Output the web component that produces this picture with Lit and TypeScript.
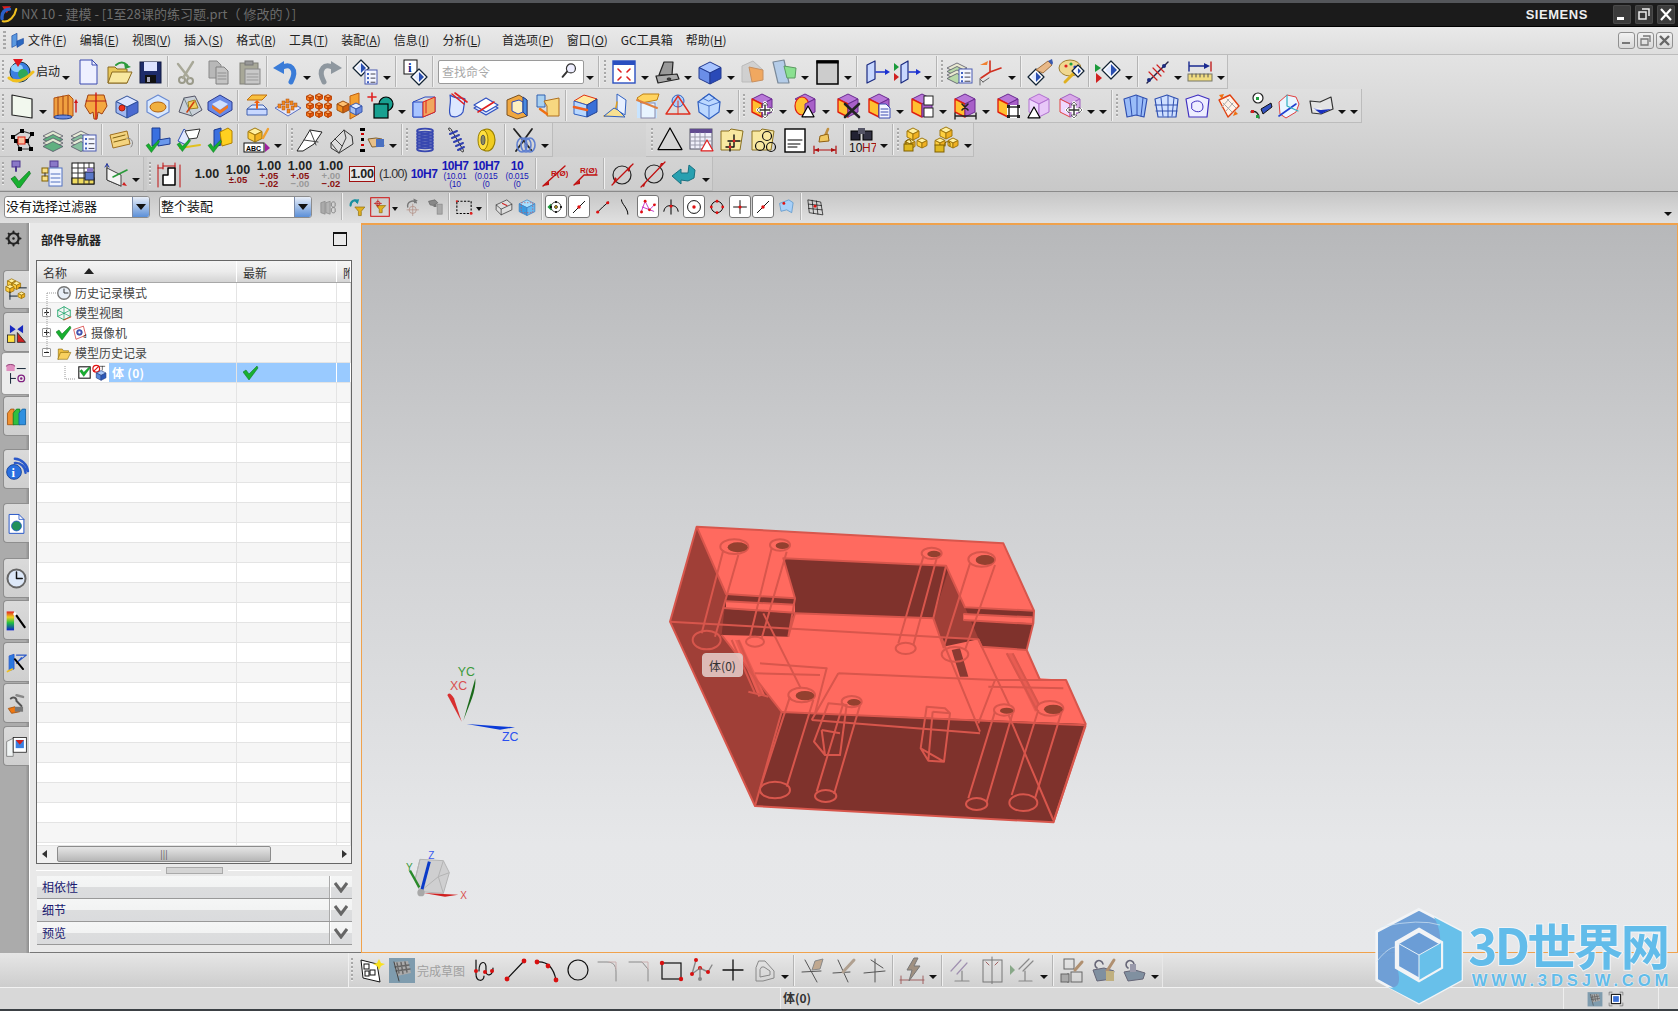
import { LitElement, html, css, TemplateResult } from 'lit';
import { customElement } from 'lit/decorators.js';
import { unsafeSVG } from 'lit/directives/unsafe-svg.js';

const P = (pts: string, fill: string, stroke = 'none', sw = 1) => `<polygon points="${pts}" fill="${fill}" stroke="${stroke}" stroke-width="${sw}" stroke-linejoin="round"/>`;
const L = (d: string, stroke = '#000', sw = 1, fill = 'none') => `<path d="${d}" fill="${fill}" stroke="${stroke}" stroke-width="${sw}" stroke-linecap="round" stroke-linejoin="round"/>`;
const O = (cx: number, cy: number, r: number, fill = 'none', stroke = '#000', sw = 1) => `<circle cx="${cx}" cy="${cy}" r="${r}" fill="${fill}" stroke="${stroke}" stroke-width="${sw}"/>`;
const E = (cx: number, cy: number, rx: number, ry: number, fill = 'none', stroke = '#000', sw = 1) => `<ellipse cx="${cx}" cy="${cy}" rx="${rx}" ry="${ry}" fill="${fill}" stroke="${stroke}" stroke-width="${sw}"/>`;
const R = (x: number, y: number, w: number, h: number, fill = 'none', stroke = '#000', sw = 1) => `<rect x="${x}" y="${y}" width="${w}" height="${h}" fill="${fill}" stroke="${stroke}" stroke-width="${sw}"/>`;
const T = (x: number, y: number, s: string, size: number, fill = '#000', w = 'normal') => `<text x="${x}" y="${y}" font-size="${size}" font-weight="${w}" fill="${fill}" font-family="Liberation Sans,sans-serif">${s}</text>`;
const cube = (cx: number, cy: number, s: number, t: string, l: string, r: string, st = '#334') =>
  P(`${cx},${cy - s} ${cx + s},${cy - s / 2} ${cx},${cy} ${cx - s},${cy - s / 2}`, t, st) +
  P(`${cx - s},${cy - s / 2} ${cx},${cy} ${cx},${cy + s} ${cx - s},${cy + s / 2}`, l, st) +
  P(`${cx + s},${cy - s / 2} ${cx},${cy} ${cx},${cy + s} ${cx + s},${cy + s / 2}`, r, st);
const yc = (cx: number, cy: number, s: number) => cube(cx, cy, s, '#fff0a0', '#ffd040', '#f0b020', '#a07810');
const dia = (cx: number, cy: number, s: number) => P(`${cx},${cy - s} ${cx + s},${cy} ${cx},${cy + s} ${cx - s},${cy}`, '#fff', '#123', 1.2) + P(`${cx},${cy - s + 3} ${cx + s - 3},${cy} ${cx},${cy + s - 3}`, '#2a4fb0') + P(`${cx},${cy - s + 3} ${cx - s + 3},${cy} ${cx},${cy + s - 3}`, '#dfe8ff');
const doc = (x: number, y: number, w: number, h: number) => R(x, y, w, h, '#f4f6ff', '#4a5ab0') + [0, 1, 2].map(i => R(x + 2, y + 3 + i * (h / 3.4), 2, 2, '#4060c0', 'none') + L(`M${x + 6} ${y + 4 + i * (h / 3.4)}h${w - 8}`, '#445')).join('');
const stack = (cx: number, cy: number, c1: string, c2: string) => [0, 1, 2, 3].map(i => P(`${cx},${cy - 6 + i * 3.5} ${cx + 10},${cy - 1 + i * 3.5} ${cx},${cy + 4 + i * 3.5} ${cx - 10},${cy - 1 + i * 3.5}`, i % 2 ? c1 : c2, '#556', .8)).join('');
const check = (x: number, y: number, s = 1, c = '#18b030') => `<path transform="translate(${x} ${y}) scale(${s})" d="M0 6 L3 4 L6 8 L14 0 L15 2 L6 14 Z" fill="${c}" stroke="#0a6a1a" stroke-width=".5"/>`;
const sync = (o: string) => P('14,2 24,7 14,12 4,7', '#b878d8', '#6a2a90') + P('4,7 14,12 14,25 4,20', '#ffc030', '#e02010', 1.4) + P('24,7 14,12 14,25 24,20', '#a860c8', '#6a2a90') + o;
const move = (cx: number, cy: number) => L(`M${cx - 7} ${cy}h14M${cx} ${cy - 7}v14`, '#fff', 4) + L(`M${cx - 7} ${cy}h14M${cx} ${cy - 7}v14`, '#333', 1.4) + P(`${cx - 8},${cy} ${cx - 5},${cy - 3} ${cx - 5},${cy + 3}`, '#fff', '#333', .6) + P(`${cx + 8},${cy} ${cx + 5},${cy - 3} ${cx + 5},${cy + 3}`, '#fff', '#333', .6) + P(`${cx},${cy - 8} ${cx - 3},${cy - 5} ${cx + 3},${cy - 5}`, '#fff', '#333', .6) + P(`${cx},${cy + 8} ${cx - 3},${cy + 5} ${cx + 3},${cy + 5}`, '#fff', '#333', .6);
const tri = (cx: number, cy: number, s: number, f = '#fff', st = '#000') => P(`${cx},${cy - s} ${cx + s},${cy + s * .8} ${cx - s},${cy + s * .8}`, f, st, 1.2);
const hex = (f: string) => P('14,3 25,9 25,20 14,26 3,20 3,9', f, '#6a8ad0', 1.2);

const I: Record<string, string> = {
  start: O(13, 14, 10, '#3a7fe0', '#134') + E(10, 10, 6, 4, '#8fd0ff', 'none') + E(16, 16, 5, 5, '#2ea85a', 'none') + P('6,1 16,1 11,9', '#e01820') + L('M2 20 Q12 28 26 14', '#f0c020', 3),
  new: P('6,2 18,2 23,7 23,26 6,26', '#eef0ff', '#3a4ab0') + L('M18 2v5h5', '#3a4ab0'),
  open: P('3,9 10,9 12,11 22,11 22,25 3,25', '#e8c85a', '#8a6a20') + P('7,14 27,14 22,25 3,25', '#f8e8a0', '#8a6a20') + L('M11 7 Q17 2 22 7', '#2c9a3c', 2) + P('19,5 26,9 20,11', '#2c9a3c'),
  save: R(4, 4, 21, 21, '#1e2c6a', '#101840') + R(8, 4, 13, 9, '#dde3ff', 'none') + R(9, 17, 11, 8, '#111', 'none') + R(11, 19, 3, 5, '#aab', 'none'),
  cut: O(9, 22, 3, 'none', '#9a9a8a', 2) + O(17, 23, 3, 'none', '#9a9a8a', 2) + L('M10 20 L20 4M16 20 L5 6', '#a8a898', 2.4),
  copy: P('5,3 13,3 17,7 17,20 5,20', '#b8b8b8', '#8a8a8a') + P('12,9 20,9 24,13 24,26 12,26', '#c4c4c4', '#808080') + L('M14 15h8M14 18h8M14 21h8', '#909090'),
  paste: R(5, 5, 18, 21, '#a8a898', '#808078') + R(10, 3, 8, 4, '#989898', '#777') + R(10, 11, 15, 15, '#c8c8c8', '#888') + L('M12 16h11M12 19h11M12 22h11', '#999'),
  undo: L('M9 10 C18 4 26 11 19 24', '#3a7cd8', 5) + P('1,10 12,3 12,16', '#3a7cd8'),
  redo: L('M19 10 C10 4 2 11 9 24', '#8e979f', 5) + P('27,10 16,3 16,16', '#8e979f'),
  listd: dia(9, 10, 8) + doc(13, 12, 12, 14),
  info: R(3, 2, 13, 14, '#fff', '#111') + `<text x="7" y="14" font-size="13" font-weight="bold" font-family="Liberation Serif,serif" fill="#12248a">i</text>` + dia(18, 19, 8),
  fit: R(3, 3, 22, 22, '#fff', '#2a4fc0', 1.4) + R(3, 3, 22, 4, '#2a4fc0', 'none') + L('M8 11l3 3M20 11l-3 3M8 22l3-3M20 22l-3-3', '#e02020', 1.6),
  shade: P('11,4 20,4 19,17 6,17', '#999', '#222', 1.2) + P('3,18 24,16 26,21 5,25', '#aaa', '#222', 1.2) + E(16, 21, 2, 1, '#555', '#222'),
  bluecube: cube(14, 15, 11, '#a8c4ff', '#6a8ee8', '#2a4ab8', '#223a90'),
  orangecut: P('3,8 14,3 24,12 13,24 3,24', 'rgba(190,190,190,.5)', '#bbb') + P('10,9 24,12 24,22 13,24', '#f0a860', '#c89060'),
  greensec: P('3,4 14,2 19,25 8,25', '#b4cce8', '#7a8a9a', 1.2) + P('14,8 26,10 25,20 17,20', '#8ae090', '#5a9a60'),
  blackrect: R(4, 3, 21, 23, '#ccc', '#000', 1.5) + R(4, 3, 21, 2, '#000', '#000'),
  sheeta: P('5,7 13,3 13,21 5,25', '#c8d8ff', '#1a2a80', 1.2) + L('M14 14h10', '#1a30d0', 1.6) + P('28,14 23,11 23,17', '#1a30d0'),
  sheetb: P('1,5 6,9 1,13', '#1a9a3a') + P('1,15 6,19 1,23', '#d02020') + P('8,7 15,3 15,21 8,25', '#c8d8ff', '#1a2a80', 1.2) + L('M16 14h8', '#1a30d0', 1.6) + P('28,14 23,11 23,17', '#1a30d0'),
  laylist: stack(11, 11, '#b8d8a8', '#e8e8d0') + doc(13, 11, 13, 14),
  axes: L('M13 14 L24 10M13 14 L13 3M13 14 L4 20', '#d03020', 1.6) + P('3,7 11,3 10,7', '#f08030') + L('M6 24l-3-3 M6 24 l6-4 M3 27 v-6', '#666'),
  handd: dia(10, 19, 8) + P('10,12 22,3 26,7 17,15', '#e8b888', '#a07040') + P('22,3 26,1 27,5 26,7', '#3a5ab0'),
  palette: E(13, 10, 11, 8, '#f0d890', '#a08030') + O(9, 8, 1.6, '#e02020', 'none') + O(14, 6, 1.6, '#20a040', 'none') + O(18, 9, 1.6, '#2040d0', 'none') + L('M8 24 L16 16', '#e0b020', 3) + dia(21, 13, 6),
  flagd: P('1,6 7,10 1,14', '#1a9a3a') + P('2,15 8,20 2,25', '#d02020') + dia(17, 12, 9),
  ant: L('M4 25 L25 4', '#224', 1.4) + L('M6 14 l8 8M10 10l8 8M14 7l7 7', '#d02020', 1.2) + O(21, 8, 2, '#1a2a80', 'none') + O(6, 22, 2, '#1a2a80', 'none'),
  ruler: L('M3 4v9M3 8h18', '#1a2a90', 1.4) + P('24,8 18,5 18,11', '#1a2a90') + L('M25 4v9', '#c02020', 1.4) + R(2, 16, 24, 7, '#f0dc80', '#776') + L('M6 16v3M10 16v3M14 16v3M18 16v3M22 16v3', '#555'),
  plane: P('4,3 24,7 24,26 4,23', '#f2f8ee', '#222', 1.2),
  extr: P('3,6 18,3 22,7 22,24 3,26', '#f0a040', '#b05010') + L('M7 5v21M12 4v21M17 4v20', '#a04010') + E(12, 25, 9, 2, '#6a8ae0', '#204090') + L('M25 20v-10', '#d01818', 1.4) + P('25,7 23,11 27,11', '#d01818'),
  rev: P('6,3 22,3 25,14 20,22 16,20 15,27 12,27 11,20 8,22 3,14', '#f4a840', '#a04010') + L('M14 1v26', '#d01818', 1.4) + L('M4 9h20', '#b02020'),
  holeb: cube(14, 15, 11, '#dce6ff', '#a0b8f0', '#4a6ad0', '#30509a') + O(9, 16, 3, '#f03020', '#a02010'),
  bossh: hex('#d8e8ff') + E(14, 15, 8, 5, '#f0b040', '#b06010'),
  pocketp: P('4,20 9,6 20,4 27,18 17,24', '#c8d0d8', '#556') + L('M9 6 L17 24', '#788') + P('13,10 20,8 23,16 14,17', '#f0d060', '#a08020') + L('M12 20 L19 10', '#d04010', 1.6),
  padv: P('14,3 26,10 26,18 14,25 2,18 2,10', '#6a8ae8', '#2a3a90') + P('14,8 22,12 14,18 6,12', '#cfe0ff') + P('6,13 14,18 22,13 22,16 14,22 6,16', '#f07820'),
  up: P('9,3 24,3 19,8 4,8', '#f8c040', '#c07010') + P('4,17 24,17 24,23 4,23', '#c8d8ff', '#4060b0') + P('9,13 20,13 24,17 4,17', '#dce8ff', '#4060b0') + L('M14 16v-6', '#f06010', 2) + P('14,8 11,11 17,11', '#f06010'),
  array: P('1,16 14,9 27,16 14,24', '#e4eaff', '#5a70c0') + [[9, 12], [13, 10], [17, 12], [9, 17], [13, 15], [18, 17], [14, 20], [5, 15], [21, 14]].map(a => R(a[0] - 1, a[1] - 3, 3, 4, '#f08a20', '#b05010', .5)).join(''),
  pattern: [[5, 6], [14, 5], [23, 6], [5, 14], [14, 14], [23, 14], [5, 22], [14, 22], [23, 22]].map(a => cube(a[0], a[1], 3.4, '#ffb070', '#ff8020', '#e85810', '#b84000')).join(''),
  mirror: P('14,4 23,1 23,22 14,27', '#f5a030', '#c06010') + cube(7, 15, 6, '#ffc070', '#f09020', '#d06010', '#a05010') + cube(20, 17, 6, '#e0eaff', '#a8c0f0', '#6a8ae0', '#3a5ab0'),
  combine: L('M5 1v8M1 5h8', '#e02020', 1.6) + O(19, 12, 7, '#18a090', '#000', 1.2) + R(7, 12, 14, 14, '#18a090', '#000', 1.2),
  trimb: P('3,10 15,5 25,5 25,20 13,25 3,25', 'none', '#2a4ac0') + P('3,10 13,10 13,25 3,25', '#a8c4ff', '#2a4ac0') + P('13,10 25,5 25,20 13,25', '#f0a860', '#e02020') + L('M16 9v12', '#e02020'),
  splitp: L('M9 3 C16 8 22 5 24 7 L22 20 C20 24 14 26 10 24 C6 20 11 12 9 3Z', '#3050c0', 1.2, '#dce8ff') + L('M11 2 L23 12M14 1 L26 10', '#e02020', 1.6),
  sew: P('2,16 14,9 26,16 14,23', '#dce8ff', '#3050c0', 1.2) + P('2,13 14,6 26,13 14,20', '#fff', '#3050c0', 1.2) + L('M6 20 L22 10', '#e02020', 1.6),
  shell: P('4,8 16,3 24,8 24,24 14,27 4,23', '#f0a840', '#7a5020') + P('9,10 16,8 20,10 20,20 15,22 9,19', '#fff0c0', '#2a4ac0') + P('20,5 24,8 24,24 20,20', '#4a8ae0', '#204090'),
  offsetf: P('3,3 11,3 11,15 3,15', '#a8d0f0', '#3060b0') + P('10,9 25,6 25,24 13,24 13,14', '#f8d880', '#b07020') + L('M6 17 L13 22', '#f07010', 2.4),
  redblock: P('3,9 13,3 26,7 16,13', '#ffeaa0', '#e03010') + P('3,9 16,13 16,25 3,22', '#b8d8ff', '#3060c0') + P('16,13 26,7 26,20 16,25', '#3a70d8', '#204090') + L('M3 15 L16 18', '#f06020', 2.6),
  surfl: P('15,2 24,8 23,23 15,18', '#e8f0ff', '#3060c0') + L('M2 24 C12 24 14 18 15 10', '#e0a020', 1.6) + P('2,24 12,16 16,18 23,25', '#f8e090', '#3060c0'),
  sectb: R(4, 6, 20, 20, '#c8e4ff', 'none') + P('4,6 10,2 26,2 24,8 8,11', '#ffd460', '#c08010') + R(8, 11, 14, 15, '#e8f4ff', '#88a') + L('M4 8 L24 16', '#e08040', 2),
  cone: O(14, 9, 6, '#a8d0ff', '#3060c0') + P('14,4 26,22 2,22', 'none', '#e03020', 1.4) + L('M14 9v13', '#e03020'),
  gem: P('14,2 25,10 24,20 14,27 4,20 3,10', '#bcd8ff', '#3060c0', 1.2) + L('M3 10 L14 14 L25 10M14 14v13M8 6 L14 2 L20 6 L14 9Z', '#3060c0', .8),
  m1: sync(move(17, 18)),
  m2: P('14,2 24,7 14,12 4,7', '#b878d8', '#6a2a90') + E(11, 14, 7, 9, '#ffc030', '#e02010', 1.2) + P('24,7 14,12 14,25 24,20', '#a860c8', '#6a2a90') + tri(17, 20, 6),
  m3: sync(L('M11 12 L25 25M25 12 L11 25', '#222', 2.6)),
  m4: sync(P('14,12 21,12 25,16 25,26 14,26', '#f4f6ff', '#3a4ab0') + L('M16 17h7M16 20h7M16 23h7', '#3a4ab0')),
  m5: sync(R(16, 4, 9, 9, '#fff', '#222') + R(16, 16, 9, 9, '#fff', '#222')),
  m6: sync(L('M11 12l6 6M17 12l-6 6', '#222', 1.6) + L('M4 24h21M4 21v6M25 21v6', '#222', 1.4)),
  m7: sync(R(13, 13, 13, 13, '#fff', 'none') + R(15, 15, 9, 9, 'none', '#222', 1.4) + R(13, 13, 3, 3, '#222', 'none') + R(23, 13, 3, 3, '#222', 'none') + R(13, 23, 3, 3, '#222', 'none') + R(23, 23, 3, 3, '#222', 'none')),
  m8: P('14,2 24,7 14,12 4,7', '#e0b0f0', '#b070d0') + P('4,7 14,12 14,25 4,20', '#f0d8ff', '#b070d0') + P('24,7 14,12 14,25 24,20', '#e8c8f8', '#b070d0') + tri(9, 21, 6),
  m9: P('14,2 24,7 14,12 4,7', '#d8a8e8', '#a060c0') + P('4,7 14,12 14,25 4,20', '#f0d8ff', '#e04040') + P('24,7 14,12 14,25 24,20', '#d8b0e8', '#a060c0') + move(18, 18),
  s1: P('3,7 15,3 26,7 23,25 15,23 6,25', '#9abcf8', '#3050b0', 1.2) + L('M9 6 L11 24M16 4 L16 23M22 6 L20 24', '#3050b0'),
  s2: P('3,7 15,3 26,7 24,25 6,25', '#cfe0ff', '#3050b0', 1.2) + L('M3 13 H25M4 19 H25M9 6 L11 24M16 4 L16 25M22 6 L20 24', '#3050b0'),
  s3: P('3,7 15,3 26,7 24,25 6,25', '#eef', '#4030c0', 1.2) + L('M9 11 C14 7 20 9 20 15 C20 21 12 21 9 17Z', '#4030c0'),
  s4: P('5,8 16,3 25,14 14,25', '#fff2e8', '#e04010', 1.4) + L('M9 11l9 9M13 7l9 9M8 15l7-8M12 19l7-8', '#aaa') + P('5,3 10,2 8,7', '#f07010') + P('24,22 19,24 21,19', '#f07010'),
  s5: O(13, 6, 5, '#fff', '#222', 1.2) + L('M6 20 C11 18 14 22 14 26', '#222', 1.4) + R(11, 5, 3, 3, '#20a040', 'none') + R(6, 18, 3, 3, '#d02020', 'none') + R(11, 23, 3, 3, '#20a040', 'none') + P('16,17 26,11 27,15 18,22', '#3050c0', '#111'),
  s6: P('3,10 11,3 20,5 23,12 20,20 10,26 4,22', '#eaf6ff', '#e04040') + L('M3 24 L20 12', '#2040d0', 1.6) + L('M11 3 L11 14 L22 19', '#30b0c0', 1.2),
  s7: P('3,9 13,10 24,5 26,17 14,22 5,21', '#e4e4e4', '#333', 1.2) + P('6,16 14,22 24,17 14,18', '#1a30c0') + L('M6 17h8', '#fff'),
  nodes: L('M5 11 L14 5 L24 8 L19 15 L23 23 L12 23 L8 15Z', '#333', 1.2) + [[5, 11], [14, 5], [24, 8], [19, 15], [23, 23], [12, 23], [8, 15]].map(a => R(a[0] - 2, a[1] - 2, 4, 4, '#000', 'none')).join('') + R(10, 11, 7, 7, '#f8c0a0', '#e02010'),
  layers: stack(14, 11, '#60b080', '#e0e8d0'),
  layersd: stack(11, 11, '#88c0a0', '#e8ecd8') + doc(13, 9, 13, 16),
  tag: P('3,9 20,5 23,18 6,22', '#f4d480', '#a07020') + L('M6 12l12-3M7 16l12-3', '#806010') + L('M20 12 C26 12 27 18 24 21', '#888'),
  vb: P('8,2 16,2 16,17 8,20', '#3a70e0', '#1a3a90') + P('14,14 26,12 26,18 14,20', '#6a98ec', '#1a3a90') + check(2, 14, .9),
  vw: P('9,3 16,9 11,19 3,15', '#e0e8ff', '#3050b0') + P('10,5 25,3 22,12 14,13', '#fff', '#333') + L('M5 22 L25 19', '#e0c020', 2) + check(2, 13, .9),
  vy: P('8,4 15,2 15,19 8,21', '#3a70e0', '#1a3a90') + P('14,6 22,2 26,5 26,17 16,20', '#ffd020', '#b08000') + check(2, 14, .9),
  abc: cube(12, 9, 7, '#fff0a0', '#ffd040', '#f0b020', '#a07810') + L('M20 12 L25 3', '#f0a030', 2.4) + R(1, 17, 20, 9, '#fff', '#111') + T(3, 25, 'ABC', 7, '#000', 'bold') + P('22,17 27,22 22,26', '#a020a0'),
  ridge1: P('1,25 8,14 14,4 26,6 18,18 7,25', '#fff', '#222') + L('M14 4 L20 19M8 14 L22 16', '#444'),
  ridge2: P('4,17 17,4 25,10 26,18 12,27 4,22', '#ddd', '#333') + L('M4 17 L12 27M17 4 L19 12 L12 27M8 13 L15 20', '#444'),
  handl: R(2, 2, 5, 3, '#000', 'none') + R(3, 7, 3, 2, '#c00', 'none') + R(3, 12, 3, 3, '#000', 'none') + R(3, 18, 3, 2, '#c00', 'none') + R(2, 23, 5, 3, '#000', 'none') + P('10,13 18,12 24,13 26,20 14,21', '#e8c088', '#806030') + R(18, 13, 8, 8, '#4a70c0', 'none'),
  coil: [5, 8, 11, 14, 17, 20, 23].map(y => E(14, y, 8, 2.4, 'none', '#3848b0', 1.8)).join(''),
  spring: L('M8 5 C4 1 9 1 10 5 L20 22 C24 27 19 27 18 23', '#222', 1) + L('M8 8l7-3M10 12l7-3M12 16l7-3M14 20l7-3M16 24l6-3', '#3040b0', 2),
  tape: E(14, 14, 8, 11, '#f0cc20', '#9a8000', 1.2) + E(10, 14, 5, 10, '#ffe040', '#9a8000') + E(10, 14, 2, 5, '#8a8a60', '#555'),
  xspring: L('M4 3 L22 25M22 3 L6 25', '#222', 1.8) + [10, 14, 18].map(x => E(x + 2, 19, 5, 7, 'none', '#6080d0', 1.6)).join(''),
  tri: tri(14, 14, 12, 'none', '#000'),
  gridt: R(3, 3, 22, 20, '#f0f0fa', '#556') + R(3, 3, 22, 4, '#604a90', 'none') + L('M3 11h22M3 15h22M3 19h22M8 7v16M13 7v16M18 7v16', '#99a') + tri(20, 20, 6, '#fff', '#e02020'),
  f1: P('3,5 11,5 13,3 25,5 22,24 3,24', '#f8e8a0', '#8a7020') + L('M10 15h12M16 9v12M8 21h8M12 17v8', '#111', 1.4) + O(16, 15, 1.4, '#e02020', 'none') + O(12, 21, 1.4, '#e02020', 'none'),
  f2: P('3,5 11,5 13,3 25,5 22,24 3,24', '#f8e8a0', '#8a7020') + O(18, 10, 4.5, 'none', '#111', 1.2) + O(11, 20, 4.5, 'none', '#111', 1.2) + O(22, 21, 4.5, 'none', '#111', 1.2),
  notes: R(5, 3, 20, 23, '#fff', '#000', 1.4) + L('M8 14h14M8 18h12M8 21h9', '#000'),
  brush: L('M17 3 L14 10', '#c09040', 2.6) + P('9,10 17,8 18,15 8,16', '#f0c860', '#906010') + L('M3 24h22M3 20v8M25 20v8', '#b01010', 1.2) + P('3,24 8,22 8,26', '#b01010') + P('25,24 20,22 20,26', '#b01010'),
  binoc: R(3, 5, 9, 9, '#223', '#000') + R(15, 5, 9, 9, '#334', '#000') + R(10, 2, 7, 6, '#556', 'none') + T(1, 26, '10', 12, '#111') + T(14, 26, 'H7', 12, '#a01010'),
  lock1: yc(12, 8, 6) + yc(9, 18, 5) + yc(21, 17, 5) + R(3, 18, 9, 7, '#e0b820', '#806000') + L('M5 18 v-3 a3 3 0 0 1 5 0 v3', '#806000'),
  lock2: yc(14, 7, 6) + yc(8, 17, 5) + yc(21, 17, 5) + R(3, 19, 9, 7, '#e0b820', '#806000') + L('M13 20 v-3 a3 3 0 0 1 5 0 v3', '#806000'),
  v1: R(4, 1, 8, 6, '#8a78c8', '#503a90') + L('M8 7v4', '#503a90', 2) + check(3, 11, 1.3),
  tree: R(11, 1, 8, 6, '#8a78c8', '#503a90') + R(3, 8, 6, 5, '#f8e088', '#806000') + R(3, 16, 6, 5, '#f8e088', '#806000') + L('M6 13v3', '#333') + R(10, 8, 13, 18, '#f0f4ff', '#5070c0') + L('M12 14h9M12 18h9M12 22h9', '#5070c0'),
  table: R(2, 3, 22, 21, '#fff', '#111') + R(2, 18, 22, 6, '#f0dc60', '#111') + L('M2 8h22M2 13h22M8 3v21M14 3v21M19 3v21', '#333') + R(15, 12, 9, 8, '#5a78c8', '#223') + R(17, 8, 6, 4, '#8a78c8', 'none'),
  axis: L('M6 4 L6 20 L20 26', '#222') + P('6,8 20,15 20,26 6,20', '#f4f4f4', '#444') + L('M6 4l-2 3M6 4l2 3', '#1a30b0') + L('M12 17 L26 10', '#2a9a3a', 1.6) + P('26,26 21,25 23,22', '#d02020'),
  dimi: L('M3 5v22M3 8h5', '#c01010') + L('M8 6h12M8 3v6M20 3v6', '#c01010') + L('M25 5v22', '#c01010') + P('8,25 8,15 13,15 13,8 20,8 20,25', '#fff', '#000', 1.5),
  rs: L('M3 26 L25 6', '#c01010', 1.4) + P('3,26 9,21 9,25', '#c01010') + T(11, 16, 'R(Ø)', 8, '#c01010', 'bold'),
  ra: L('M3 25 L13 15 H26', '#c01010', 1.4) + P('3,25 9,20 9,24', '#c01010') + T(9, 13, 'R(Ø)', 8, '#c01010', 'bold'),
  d1: O(14, 15, 9, 'none', '#222', 1.2) + L('M4 25 L25 4', '#c01010', 1.2) + P('19,10 23,5 21,12', '#c01010') + P('9,19 5,24 7,17', '#c01010'),
  d2: O(15, 14, 9, 'none', '#222', 1.2) + L('M2 27 L26 2', '#c01010', 1.2) + P('3,26 7,22 5,27', '#c01010') + P('25,3 20,7 22,3', '#c01010'),
  teal: P('2,16 11,9 11,13 18,13 19,5 25,10 24,18 18,21 11,20 11,24', '#28a0b0', '#187080'),
  linked: P('4,8 10,6 10,24 4,22', '#aaa', '#888') + P('11,8 17,6 17,24 11,22', '#b4b4b4', '#888') + L('M19 8a3 3 0 0 1 5 0v5a3 3 0 0 1-5 0zM19 16a3 3 0 0 1 5 0v5a3 3 0 0 1-5 0z', '#888', 1.4),
  funnela: L('M5 12 C5 5 12 3 14 7', '#1890a0', 3) + P('10,4 17,3 15,10', '#1890a0') + P('11,14 25,14 20,20 20,26 16,26 16,20', '#e0b020', '#907010'),
  funnelb: R(1, 1, 26, 26, 'none', '#d01010', 1.4) + P('9,12 22,12 17,17 17,22 13,22 13,17', '#e0b020', '#907010') + O(11, 9, 3, 'none', '#c01010') + L('M11 4v10M6 9h10', '#c01010'),
  crossg: L('M8 14a7 7 0 0 1 12 -6', '#777', 2) + P('16,2 22,5 17,9', '#777') + O(15, 18, 5, 'none', '#b08a80') + L('M15 10v16M7 18h16', '#b08a80'),
  gray2: P('5,6 14,4 18,8 12,12 7,11', '#888', '#666') + R(17, 10, 7, 14, '#aaa', '#888') + R(12, 10, 4, 4, '#777', 'none'),
  dashr: `<rect x="4" y="6" width="20" height="17" fill="none" stroke="#000" stroke-width="1.5" stroke-dasharray="3 2"/>` + O(24, 23, 2, '#e02020', 'none') + O(4, 6, 1.5, '#e02020', 'none'),
  box1: P('3,11 18,4 25,10 25,18 10,25 3,18', '#ddd', '#333') + L('M3 11 L10 17 L25 10M10 17v8', '#333') + L('M12 9 L18 12', '#d02020', 1.6),
  box2: cube(14, 15, 11, '#a8e0ff', '#3a9ae0', '#68b8f0', '#4080c0') + `<rect x="6" y="8" width="16" height="14" fill="none" stroke="#d05050" stroke-dasharray="2 2"/>`,
  sb1: P('2,14 7,9 9,13 9,17 7,19', '#1a9a3a') + O(14, 14, 7, '#fff', '#000') + O(14, 14, 2, '#f0c020', '#000') + O(14, 7, 1.5, '#000', 'none') + O(14, 21, 1.5, '#000', 'none') + O(7, 14, 1.5, '#000', 'none') + O(21, 14, 1.5, '#000', 'none'),
  sb2: L('M6 22 L22 6', '#000', 1.3) + O(14, 14, 2.4, '#e01010', 'none'),
  sb3: L('M7 22 L15 14 L23 7', '#000', 1.3) + O(8, 21, 2.2, '#e01010', 'none') + O(22, 8, 2.2, '#e01010', 'none'),
  sb4: L('M9 4 C9 10 18 15 18 24', '#000', 1.4),
  sb5: L('M4 22 L10 6 L16 18 L24 10 M6 14 L22 20', '#c020c0', 1.2) + O(10, 6, 2, '#e01010', 'none') + O(16, 18, 2, '#e01010', 'none') + O(5, 21, 2, '#e01010', 'none') + O(23, 11, 2, '#e01010', 'none'),
  sb6: L('M14 4v20M4 20 C5 13 10 12 14 12 C18 12 23 13 24 20', '#000', 1.4) + O(14, 13, 2, '#e01010', 'none'),
  sb7: O(14, 14, 9, 'none', '#000', 1.3) + O(14, 14, 2.4, '#e01010', 'none'),
  sb8: O(14, 14, 8, 'none', '#000', 1.3) + [[14, 6], [6, 14], [22, 14], [14, 22]].map(a => O(a[0], a[1], 2, '#e01010', 'none')).join(''),
  sb9: L('M14 5v18M5 14h18', '#000', 1.3) + O(14, 14, 2.2, '#e01010', 'none'),
  sb10: P('5,9 18,4 24,8 22,22 15,18 7,20', '#a8d0f8', '#5090c8') + O(11, 9, 2, '#e01010', 'none'),
  sb11: P('4,4 22,7 25,25 6,22', 'none', '#111') + L('M10 4.5 L12 23M16 5.5 L18 24M5 10 L23 12M5 16 L24 18', '#111') + O(14, 13, 2, '#e01010', 'none'),
  sknew: P('4,4 20,8 23,26 6,22', '#fff', '#111') + R(7, 8, 5, 5, '#fff', '#111') + R(13, 14, 5, 5, '#fff', '#111') + R(8, 15, 4, 5, '#fff', '#111') + P('22,3 24,7 28,8 24,10 22,14 20,10 16,8 20,7', '#f8e020'),
  flag: R(1, 2, 26, 25, '#7f9cae', 'none') + P('6,6 20,5 23,17 9,20', '#aaa') + L('M9 7l2 10M13 6.500l2 11M17 6l2 10M7 11l14-2M8 15l14-2', '#666', 1.4) + L('M6 6 L11 25', '#444'),
  sym: L('M8 15 C8 4 16 4 15 13 C14 22 22 20 22 12', '#111', 1.2) + L('M5 4v14C5 26 13 26 13 20', '#111', 1.2) + O(5, 15, 2, '#d81010', 'none') + O(14, 16, 2, '#d81010', 'none') + O(21, 15, 2, '#d81010', 'none'),
  line: L('M5 23 L22 5', '#111', 1.2) + O(5, 23, 2.4, '#d81010', 'none') + O(22, 5, 2.4, '#d81010', 'none'),
  arc: L('M4 6 C16 5 21 14 23 24', '#111', 1.2) + O(4, 6, 2.4, '#d81010', 'none') + O(15, 10, 2.4, '#d81010', 'none') + O(23, 24, 2.4, '#d81010', 'none'),
  circle: O(14, 14, 10, 'none', '#111', 1.2),
  fillet: L('M3 6 H12 C18 6 21 9 21 16 V25', '#8a8a8a', 1) + L('M14 6 H21 V13', '#ccb0b0', 1),
  chamfer: L('M3 6 H16 L22 13 V25', '#8a8a8a', 1) + L('M16 6 H22 V13', '#ccb0b0', 1),
  rect: R(5, 7, 19, 16, 'none', '#111', 1.2) + O(5, 7, 2.2, '#d81010', 'none') + O(24, 23, 2.2, '#d81010', 'none'),
  poly: L('M8 4 L4 18 L12 12 L20 16 L24 9', '#888', 1.4) + O(8, 4, 2, '#d81010', 'none') + O(4, 18, 2, '#d81010', 'none') + O(12, 12, 2, '#d81010', 'none') + O(20, 16, 2, '#d81010', 'none') + L('M12 12v10', '#888', 1.4) + O(12, 23, 2, '#888', 'none'),
  plus: L('M14 4v20M4 14h20', '#111', 1.3),
  offs: L('M9 5 H15 L24 15 V22 L13 25 H6 V12Z', '#888', 1) + L('M12 11 H14 L20 15 V19 L10 21 V14Z', '#888', 1),
  trim1: L('M6 4 L18 26M3 16 L22 15', '#555', 1) + P('16,5 24,3 21,13 13,14', '#c0a890', '#888'),
  trim2: L('M8 4 L18 26M3 17 L20 16', '#555', 1) + L('M13 16 L24 4', '#b0a090', 3),
  trim3: L('M14 3v23M3 17 L24 15M10 4 L22 12', '#555', 1),
  spark: L('M2 24h24M3 20v8M25 20v8', '#a06060') + P('16,2 9,14 14,14 11,25 22,10 16,10 20,2', '#a09080', '#777'),
  para: L('M4 15 L14 4M10 18 L20 7', '#a090b0', 1.2) + L('M8 25h14M15 15v10', '#888', 1.2),
  mir: R(5, 4, 19, 22, 'none', '#777', 1) + L('M14 1v27', '#777') + L('M8 6l3 3M20 6l-3 3', '#a06060'),
  cons: P('1,9 6,14 1,19', '#88a888') + L('M10 13 L20 3M14 15 L24 5', '#8a8a8a', 1.2) + L('M10 25h13M16 15v10', '#888', 1.2),
  sk1: R(6, 3, 10, 10, 'none', '#666') + R(13, 16, 11, 10, 'none', '#666') + L('M10 26v-8', '#888', 2) + L('M17 14 L24 6', '#b09070', 3) + R(3, 18, 8, 8, '#aaa', '#666'),
  sk2: P('4,14 15,12 25,15 23,23 8,25', '#8090a0', '#667') + L('M8 12a4 4 0 1 1 6-4', '#667', 1.6) + L('M18 15 L25 4', '#b09070', 3) + R(17, 15, 8, 10, '#c0b080', 'none'),
  sk3: P('4,16 15,14 25,17 23,23 8,25', '#8090a0', '#667') + L('M8 12a4 4 0 1 1 6-4', '#667', 1.6) + R(10, 8, 6, 8, '#99a', 'none'),
  clock: O(14, 14, 11, '#e8eff8', '#777', 2.4) + L('M14 7v7h7', '#222', 1.6),
  mview: P('14,3 25,9 25,20 14,26 3,20 3,9', 'none', '#10a060', 1.4) + L('M3 9 L25 20M25 9 L3 20M14 3v23', '#10a060', 1.2) + L('M14 26 L26 21', '#e04020', 1.6),
  cam: P('3,8 20,2 24,18 7,25', '#fff', '#d02020', 1.2) + O(13, 13, 5, '#5060c0', '#203080') + O(13, 13, 2, '#fff', 'none') + T(20, 22, 'd', 9),
  folder: P('4,7 11,7 13,10 22,10 22,12 4,25', '#f0c040', '#806000') + P('8,13 26,13 20,25 3,25', '#f8d060', '#806000'),
  body: O(7, 7, 5.500, 'none', '#e01010', 2) + L('M3 11 L11 3', '#e01010', 2) + L('M13 3h8M17 3v6', '#111') + cube(15, 18, 8, '#a8c8f8', '#5a88d8', '#2a58b8', '#203a80'),
};

const ROWS: string[][][] = [
  [['G', 'START', 'new', 'open', 'save', '|', 'cut', 'copy', 'paste', '|', 'undo', '>', 'redo', '|', 'listd', '>', '|', 'info', '|', 'SEARCH', '>', '|', 'G', 'fit', '>', 'shade', '>', 'bluecube', '>', 'orangecut', 'greensec', '>', 'blackrect', '>', '|', 'sheeta', 'sheetb', '>', '|', 'g', 'laylist', 'axes', '>', '|', 'handd', 'palette', '|', 'flagd', '>', '|', 'ant', '>', 'ruler', '>']],
  [['G', 'plane', '>', 'extr', 'rev', 'holeb', 'bossh', 'pocketp', 'padv', '|', 'up', 'array', 'pattern', 'mirror', 'combine', '>', 'trimb', 'splitp', 'sew', 'shell', 'offsetf', '|', 'redblock', 'surfl', 'sectb', 'cone', 'gem', '>', '|', 'g', 'm1', '>', 'm2', '>', 'm3', 'm4', '>', 'm5', '>', 'm6', '>', 'm7', 'm8', 'm9', '>', '>', '|', 'g', 's1', 's2', 's3', 's4', 's5', 's6', 's7', '>', '>']],
  [['G', 'nodes', 'layers', 'layersd', '|', 'tag', '|', 'vb', 'vw', 'vy', '|', 'abc', '>', '|', 'g', 'ridge1', 'ridge2', 'handl', '>', '|', 'g', 'coil', 'spring', 'tape', '|', 'xspring', '>'], ['_', 'G', 'tri', 'gridt', 'f1', 'f2', 'notes', 'brush', '|', 'binoc', '>', '|', 'g', 'lock1', 'lock2', '>']],
  [['G', 'v1', 'tree', 'table', 'axis', '>'], ['G', 'dimi', '_', '_', '_', 'D0', 'D1', 'D2', 'D3', 'D4', 'D5', 'D6', 'D7', 'D8', 'D9', 'D10', '|', 'rs', 'ra', '|', 'd1', 'd2', 'teal', '>']],
];

const SEL: [string, boolean][] = [['linked', false], ['|', false], ['funnela', false], ['funnelb', false], ['>', false], ['crossg', false], ['gray2', false], ['|', false], ['dashr', false], ['>', false], ['|', false], ['_', false], ['box1', false], ['box2', false], ['|', false], ['sb1', true], ['sb2', true], ['sb3', false], ['sb4', false], ['sb5', true], ['sb6', false], ['sb7', true], ['sb8', false], ['sb9', true], ['sb2', true], ['sb10', false], ['|', false], ['sb11', false]];

const BOTTOM = ['G', 'sknew', 'flag', 'DONE', 'sym', 'line', 'arc', 'circle', 'fillet', 'chamfer', 'rect', 'poly', 'plus', 'offs', '>', '|', 'trim1', 'trim2', 'trim3', '|', 'spark', '>', '|', 'para', 'mir', 'cons', '>', '|', 'sk1', 'sk2', 'sk3', '>'];

const MENU: [string, string, number][] = [['文件(', 'F', 0], ['编辑(', 'E', 0], ['视图(', 'V', 0], ['插入(', 'S', 0], ['格式(', 'R', 0], ['工具(', 'T', 0], ['装配(', 'A', 0], ['信息(', 'I', 0], ['分析(', 'L', 0], ['首选项(', 'P', 1], ['窗口(', 'O', 0], ['GC工具箱', '', 0], ['帮助(', 'H', 0]];

const TABS: { i: string; top: number; h: number; on?: boolean }[] = [
  { i: yc(8, 6, 5) + yc(14, 9, 5) + yc(6, 13, 5) + L('M6 17v9M6 22h9M17 12h9', '#123', 1.2) + yc(20, 21, 4), top: 47, h: 39 },
  { i: P('6,5 13,10 6,15', '#1828c0') + P('22,5 15,10 22,15', '#1828c0') + R(3, 17, 9, 9, '#ffe040', '#222') + P('15,14 25,26 15,26', '#d02020', '#222'), top: 3, h: 40 },
  { i: E(8, 5, 5, 2, '#e090c0', '#802060') + R(3, 5, 10, 6, '#e090c0', 'none') + L('M16 8h10M8 14v12M8 20h6', '#123', 1.2) + O(21, 20, 4, 'none', '#802080', 1.6) + O(21, 20, 1.5, '#802080', 'none'), top: 0, h: 43, on: true },
  { i: P('3,10 7,5 11,5 11,24 3,24', '#f09030', '#a05010') + P('10,10 14,5 18,5 18,24 10,24', '#30c040', '#108020') + P('17,10 21,5 25,5 25,24 17,24', '#3090e0', '#1060a0'), top: 1, h: 40 },
  { i: L('M12 6a12 12 0 0 1 13 12M12 1a17 17 0 0 1 16 15', '#2a58c8', 3) + O(11, 17, 9, '#2a70e0', '#103a90') + `<text x="8" y="23" font-size="15" font-weight="bold" font-family="Liberation Serif,serif" fill="#fff">i</text>`, top: 13, h: 40 },
  { i: P('5,3 17,3 23,9 23,26 5,26', '#fff', '#2a58c8', 1.2) + L('M17 3v6h6', '#2a58c8') + O(14, 17, 6, '#20905a', '#2a58c8'), top: 14, h: 40 },
  { i: O(14, 14, 11, '#dde8f8', '#666', 2.4) + L('M14 6v8h7', '#111', 1.8), top: 15, h: 40 },
  { i: `<defs><linearGradient id="rb" x1="0" y1="0" x2="0" y2="1"><stop offset="0" stop-color="#e02020"/><stop offset=".3" stop-color="#f0d020"/><stop offset=".6" stop-color="#20c040"/><stop offset="1" stop-color="#1020d0"/></linearGradient></defs>` + R(2, 3, 9, 23, 'url(#rb)', 'none') + L('M14 8 L24 22', '#000', 2.6) + O(12, 6, 2, '#fff', 'none'), top: 2, h: 40 },
  { i: P('5,6 11,4 11,22 5,24', '#2a78e0', '#2a58c8') + L('M14 5h12L17 12M20 8l-6 7', '#2a58c8', 1.4) + L('M12 10 L22 22', '#000', 2.4) + L('M3 25l6-3', '#f0c020', 2), top: 2, h: 40 },
  { i: L('M7 8a4 4 0 0 1 7 3L20 17', '#555', 2.4) + L('M14 4 L22 6', '#888', 3) + P('4,20 12,18 18,24 8,26', '#f07810', '#a05010') + R(12, 18, 10, 6, '#777', 'none'), top: 1, h: 40 },
  { i: P('2,8 10,4 10,26 2,26', '#f0f4f4', '#777') + R(10, 3, 16, 18, '#fff', '#222') + R(13, 6, 10, 10, '#3a80e0', 'none') + P('13,6 23,6 18,12', '#d02020'), top: 3, h: 40 },
];

const NAMES: { t: string; i: string[] }[] = [
  { t: '历史记录模式', i: ['clock'] },
  { t: '模型视图', i: ['mview'] },
  { t: '摄像机', i: ['CHK', 'cam'] },
  { t: '模型历史记录', i: ['folder'] },
];

@customElement('app-root')
export class AppRoot extends LitElement {
  static styles = css`
    :host { display: block; width: 1678px; height: 1011px; position: relative; overflow: hidden; background: #ddd; font: 12px "Noto Sans CJK SC", "Liberation Sans", sans-serif; color: #222; }
    .app { display: flex; flex-direction: column; height: 1011px; }
    .ic { width: 28px; height: 28px; display: block; flex: none; }
    .title { height: 27px; flex: none; box-sizing: border-box; background: #1b1b1b; border-top: 3px solid #54565a; border-bottom: 1px solid #000; display: flex; align-items: center; color: #6c6c6c; font-size: 13px; }
    .title .logo { width: 19px; height: 19px; flex: none; margin: 0 2px 0 0; }
    .title .name { flex: 1; padding-bottom: 2px; }
    .siemens { font: bold 13px "Liberation Sans", sans-serif; color: #eee; letter-spacing: .55px; margin-right: 25px; }
    .wc { width: 18px; height: 19px; margin-right: 4px; background: #3c3c3c; border-radius: 2px; box-shadow: inset 0 0 0 1px #4a4a4a; display: flex; align-items: center; justify-content: center; }
    .wc svg { width: 18px; height: 19px; }
    .menu { height: 28px; flex: none; box-sizing: border-box; background: linear-gradient(#e9e9e9, #dedede); border-bottom: 1px solid #bcbcbc; display: flex; align-items: center; padding-left: 3px; }
    .menu .g2 { width: 3px; height: 20px; background: repeating-linear-gradient(#a8a8a8 0 2px, transparent 2px 4px); margin-right: 2px; }
    .menu .lg { width: 18px; height: 18px; margin-right: 2px; }
    .menu span { margin-right: 13px; color: #222; white-space: nowrap; padding-bottom: 2px; }
    .menu .wide { margin-left: 8px; }
    .menu .mdi { margin-left: auto; display: flex; gap: 2px; margin-right: 5px; }
    .mb { width: 17px; height: 17px; border: 1px solid #909090; border-radius: 3px; box-sizing: border-box; background: linear-gradient(#f2f2f2, #d8d8d8); display: flex; align-items: center; justify-content: center; }
    .mb svg { width: 15px; height: 15px; }
    .tools { flex: none; background: linear-gradient(#e3e3e3, #c8c8c8); border-bottom: 1px solid #8a8a8a; }
    .row { height: 34px; display: flex; }
    .tg { display: flex; align-items: center; box-sizing: border-box; height: 34px; border-right: 1px solid #bcbcbc; border-bottom: 1px solid #bcbcbc; background: rgba(255, 255, 255, .1); }
    .it { width: 31px; height: 33px; display: flex; align-items: center; justify-content: center; flex: none; }
    .ar { width: 12px; height: 33px; flex: none; position: relative; }
    .ar::after { content: ""; position: absolute; left: 2px; bottom: 8px; border: 4px solid transparent; border-top: 4px solid #111; border-bottom: 0; }
    .sp { width: 6px; height: 31px; flex: none; position: relative; }
    .sp::after { content: ""; position: absolute; left: 2px; top: 0; bottom: 0; width: 1px; background: #b4b4b4; box-shadow: 1px 0 #f0f0f0; }
    .gr { width: 5px; height: 24px; flex: none; margin-left: 1px; background: repeating-linear-gradient(#a8a8a8 0 2px, #ececec 2px 3px, transparent 3px 4px) 1px 0 / 2px 100% no-repeat; }
    .gs { width: 4px; height: 24px; flex: none; background: repeating-linear-gradient(#a8a8a8 0 2px, #ececec 2px 3px, transparent 3px 4px) 1px 0 / 2px 100% no-repeat; }
    .pad { width: 2.500px; flex: none; }
    .start { width: 66px; height: 33px; display: flex; align-items: center; flex: none; font-size: 12px; padding-left: 1px; box-sizing: border-box; position: relative; }
    .start span { margin-left: 1px; padding-bottom: 2px; }
    .start .ar { position: absolute; right: 0; top: 0; }
    .search { width: 146px; height: 24px; box-sizing: border-box; flex: none; margin-left: 2px; background: #fff; border: 1px solid #9a9a9a; border-radius: 2px; display: flex; align-items: center; padding: 0 5px 1px 3px; color: #a8a8a8; font-size: 12px; justify-content: space-between; }
    .search svg { width: 18px; height: 18px; }
    .dim { width: 31px; height: 33px; flex: none; display: flex; flex-direction: column; align-items: center; justify-content: center; font: bold 12.500px "Liberation Sans", sans-serif; color: #222; line-height: 12px; padding-top: 1px; box-sizing: border-box; white-space: nowrap; }
    .dim .r { color: #8a1010; font-size: 9.500px; line-height: 8px; }
    .dim .g { color: #999; font-size: 9.500px; line-height: 8px; }
    .dim.b { color: #1818b8; letter-spacing: -.5px; font-size: 12px; }
    .dim.b small { font-size: 8.500px; line-height: 8px; font-weight: normal; letter-spacing: -.2px; }
    .dim .bx { border: 1px solid #a01010; padding: 1px 0; line-height: 12px; background: #e8e8e8; letter-spacing: -.3px; }
    .dim.par { color: #333; letter-spacing: -.8px; font-weight: normal; }
    .sel { height: 31px; flex: none; box-sizing: border-box; background: linear-gradient(#c6c6c6, #e0e0e0); display: flex; align-items: center; padding: 0 0 2px 4px; position: relative; }
    .end { position: absolute; right: 6px; bottom: 7px; border: 4px solid transparent; border-top: 4px solid #111; border-bottom: 0; }
    .dd { height: 22px; box-sizing: border-box; background: #fff; border: 1px solid #8c8c8c; border-radius: 3px; display: flex; align-items: center; font-size: 13px; color: #111; padding: 0 0 2px 1px; flex: none; margin-right: 9px; position: relative; }
    .dd .b { position: absolute; right: 0; top: 0; bottom: 0; width: 16px; background: linear-gradient(#e8eef8, #5c90d8); border-left: 1px solid #7a8aa8; border-radius: 0 2px 2px 0; }
    .dd .b::after { content: ""; position: absolute; left: 3px; top: 7px; border: 5px solid transparent; border-top: 6px solid #111; border-bottom: 0; }
    .sit { width: 23px; height: 23px; display: flex; align-items: center; justify-content: center; flex: none; box-sizing: border-box; }
    .sit svg { width: 20px; height: 20px; }
    .sit.box { background: #fff; border: 1px solid #777; border-radius: 3px; width: 22px; margin: 0 .5px; }
    .sel .sp { height: 27px; }
    .sel .ar { height: 23px; width: 9px; }
    .sel .ar::after { left: 1px; bottom: 7px; border-width: 3.500px; border-top-width: 4px; }
    .main { flex: 1; min-height: 0; display: flex; }
    .rail { width: 29px; flex: none; background: linear-gradient(90deg, #ababab 0, #ababab 88%, #8c8c8c 100%); display: flex; flex-direction: column; position: relative; }
    .gear { position: absolute; left: 5px; top: 7px; width: 17px; height: 17px; }
    .tab { box-sizing: border-box; margin-left: 3px; width: 26px; background: linear-gradient(#dadada, #cfcfcf); border: 1px solid #8e8e8e; border-right: 0; border-radius: 4px 0 0 4px; display: flex; align-items: center; justify-content: center; flex: none; }
    .tab.on { margin-left: 1px; width: 28px; background: #ececec; border-color: #999; }
    .tab svg { width: 23px; height: 25px; overflow: visible; }
    .panel { width: 332px; flex: none; box-sizing: border-box; background: #e9e9e9; border-left: 1px solid #fff; border-bottom: 1px solid #777; padding: 0 9px 0 6px; display: flex; flex-direction: column; }
    .phead { height: 37px; flex: none; box-sizing: border-box; display: flex; align-items: center; justify-content: space-between; padding: 0 5px 5px 5px; font-weight: bold; font-size: 12px; color: #222; }
    .phead i { width: 12px; height: 11px; border: 1.500px solid #111; border-top-width: 2px; display: block; }
    .tree { height: 604px; flex: none; box-sizing: border-box; border: 1px solid #666; background: #fff; display: flex; flex-direction: column; overflow: hidden; }
    .hd { height: 22px; flex: none; display: grid; grid-template-columns: 200px 100px 1fr; background: linear-gradient(#f4f4f4 0, #ececec 50%, #d4d4d4 100%); border-bottom: 1px solid #a8a8a8; box-sizing: border-box; }
    .hd div { border-right: 1px solid #fff; padding: 1px 0 0 6px; white-space: nowrap; overflow: hidden; color: #333; display: flex; align-items: center; position: relative; }
    .hd .s::after { content: ""; position: absolute; left: 47px; top: 7px; border: 5px solid transparent; border-bottom: 6px solid #222; border-top: 0; }
    .tb { height: 562px; flex: none; overflow: hidden; position: relative; }
    .dots { position: absolute; left: 0; top: 0; width: 100px; height: 110px; }
    .tr { height: 20px; box-sizing: border-box; display: grid; grid-template-columns: 200px 100px 1fr; border-bottom: 1px solid #e4e4e4; background: #fff; }
    .tr:nth-child(even) { background: #f6f6f6; }
    .tr > div { border-right: 1px solid #e4e4e4; display: flex; align-items: center; position: relative; white-space: nowrap; color: #444; }
    .tr svg { width: 16px; height: 16px; flex: none; }
    .tr .ex { position: absolute; left: 5px; top: 5px; width: 7px; height: 7px; border: 1px solid #999; background: #fff; border-radius: 1px; }
    .tr .ex::before { content: ""; position: absolute; left: 1px; right: 1px; top: 3px; height: 1px; background: #222; }
    .tr .ex.p::after { content: ""; position: absolute; top: 1px; bottom: 1px; left: 3px; width: 1px; background: #222; }
    .tr .lab { margin-left: 3px; }
    .tr.on { background: #fff !important; }
    .tr.on > div + div { background: #99caff; border-right-color: #fff; }
    .tr .selx { background: #99caff; color: #fff; font-weight: bold; align-self: stretch; flex: 1; display: flex; align-items: center; padding-left: 3px; margin-left: 0; letter-spacing: .3px; }
    .hs { height: 18px; flex: none; background: #f1f1f1; position: relative; box-shadow: inset 0 1px #e4e4e4; }
    .hs .th { position: absolute; left: 20px; top: 1px; width: 212px; height: 14px; border: 1px solid #8c8c8c; border-radius: 2px; background: linear-gradient(#e6e6e6, #b6b6b6); display: flex; align-items: center; justify-content: center; color: #555; font-size: 9px; }
    .hs .la, .hs .ra { position: absolute; top: 5px; border: 4px solid transparent; }
    .hs .la { left: 5px; border-right: 5px solid #333; border-left: 0; }
    .hs .ra { right: 4px; border-left: 5px solid #333; border-right: 0; }
    .sash { height: 12px; flex: none; display: flex; align-items: center; gap: 5px; }
    .sash u { flex: 1; height: 1px; background: #fff; }
    .sash b { width: 55px; height: 5px; border: 1px solid #aaa; background: #d4d4d4; }
    .acc { height: 23px; flex: none; margin-left: 1px; box-sizing: border-box; display: flex; background: linear-gradient(#f5f6f6 0, #f2f3f3 48%, #dcddde 52%, #dadbdd 100%); border-bottom: 1px solid #999; color: #1a1a70; }
    .acc span { flex: 1; display: flex; align-items: center; padding: 0 0 1px 5px; }
    .acc i { width: 22px; border-left: 1px solid #fff; box-shadow: -1px 0 #aaa; display: flex; align-items: center; justify-content: center; padding-right: 2px; box-sizing: border-box; }
    .acc svg { width: 14px; height: 12px; }
    .vp { flex: 1; min-width: 0; position: relative; box-sizing: border-box; border: 1px solid #f0a24c; border-top-width: 2px; background: linear-gradient(#b7b8ba 0, #cfd0d2 38%, #e6e7e9 85%, #e7e8ea 100%); overflow: hidden; }
    .vp svg.scene { position: absolute; left: 0; top: 0; width: 1315px; height: 727px; }
    .tip { position: absolute; left: 340px; top: 428px; width: 41px; height: 24px; border-radius: 4px; background: rgba(232, 208, 204, .85); border: 1px solid #d8c0bc; box-sizing: border-box; display: flex; align-items: center; justify-content: center; color: #333; font-size: 12px; }
    .bt { height: 35px; flex: none; box-sizing: border-box; background: linear-gradient(#e6e6e6, #cdcdcd); border-bottom: 1px solid #f2f2f2; padding-left: 348px; }
    .bt .tg { height: 34px; border: 0; border-left: 1px solid #f0f0f0; border-right: 1px solid #e8e8e8; width: 815px; background: rgba(255, 255, 255, .08); }
    .done { width: 50px; color: #a0a0a0; flex: none; margin-right: 2px; white-space: nowrap; }
    .st { height: 21px; flex: none; background: #d8d8d8; display: flex; align-items: center; font-weight: bold; color: #333; }
    .st div { height: 21px; box-sizing: border-box; display: flex; align-items: center; }
    .st .a { width: 781px; border-right: 1px solid #eee; }
    .st .b2 { width: 783px; border-right: 1px solid #eee; padding: 0 0 2px 2px; }
    .st .c { width: 95px; border-right: 1px solid #eee; padding-left: 23px; gap: 5px; }
    .st svg { width: 16px; height: 16px; }
    .dk { height: 2px; flex: none; background: #3b4044; }
    .wm { position: absolute; left: 1340px; top: 890px; width: 338px; height: 121px; pointer-events: none; }
  `;

  private ico(n: string, cls = 'ic') { return html`<svg class=${cls} viewBox="0 0 28 28">${unsafeSVG(I[n] || '')}</svg>`; }

  private dims: Record<string, TemplateResult> = {
    D0: html`<div class="dim">1.00</div>`,
    D1: html`<div class="dim">1.00<span class="r">±.05</span></div>`,
    D2: html`<div class="dim">1.00<span class="r">+.05</span><span class="r">−.02</span></div>`,
    D3: html`<div class="dim">1.00<span class="r">+.05</span><span class="g">−.00</span></div>`,
    D4: html`<div class="dim">1.00<span class="g">+.00</span><span class="r">−.02</span></div>`,
    D5: html`<div class="dim"><span class="bx">1.00</span></div>`,
    D6: html`<div class="dim par">(1.00)</div>`,
    D7: html`<div class="dim b">10H7</div>`,
    D8: html`<div class="dim b">10H7<small>(10.01</small><small>(10</small></div>`,
    D9: html`<div class="dim b">10H7<small>(0.015</small><small>(0</small></div>`,
    D10: html`<div class="dim b">10<small>(0.015</small><small>(0</small></div>`,
  };

  private tok(t: string) {
    if (t === 'G') return html`<div class="gr"></div>`;
    if (t === 'g') return html`<div class="gs"></div>`;
    if (t === '_') return html`<div class="pad"></div>`;
    if (t === '|') return html`<div class="sp"></div>`;
    if (t === '>') return html`<div class="ar"></div>`;
    if (t === 'START') return html`<div class="start">${this.ico('start')}<span>启动</span><div class="ar"></div></div>`;
    if (t === 'SEARCH') return html`<div class="search">查找命令<svg viewBox="0 0 28 28">${unsafeSVG(O(17, 10, 7, '#eef', '#333', 1.8) + L('M11 15 L4 23', '#333', 3))}</svg></div>`;
    if (t === 'DONE') return html`<div class="done">完成草图</div>`;
    if (this.dims[t]) return this.dims[t];
    return html`<div class="it">${this.ico(t)}</div>`;
  }

  private rowsLayout = [[1228], [1362], [553, 646, 974], [143.5, 147, 713]];

  private tree() {
    const rows = [];
    for (let i = 0; i < 29; i++) {
      if (i < 4) {
        const n = NAMES[i];
        rows.push(html`<div class="tr"><div style="padding-left:19px">
          ${i > 0 ? html`<span class="ex ${i === 3 ? '' : 'p'}"></span>` : ''}
          ${n.i.map(k => k === 'CHK' ? html`<svg viewBox="0 0 16 16">${unsafeSVG(check(0, 1))}</svg>` : html`<svg viewBox="0 0 28 28">${unsafeSVG(I[k])}</svg>`)}
          <span class="lab">${n.t}</span></div><div></div><div></div></div>`);
      } else if (i === 4) {
        rows.push(html`<div class="tr on"><div style="padding-left:41px">
          <svg viewBox="0 0 16 16" style="width:13px;height:13px">${unsafeSVG(R(1, 1, 14, 14, '#fff', '#111', 1.3) + check(2, 1, .85))}</svg>
          <svg viewBox="0 0 28 28" style="width:17px;height:18px;margin-left:1px">${unsafeSVG(I.body)}</svg>
          <span class="selx">体 (0)</span></div>
          <div style="padding-left:6px"><svg viewBox="0 0 16 16">${unsafeSVG(check(0, 1))}</svg></div><div></div></div>`);
      } else rows.push(html`<div class="tr"><div></div><div></div><div></div></div>`);
    }
    return rows;
  }

  render() {
    const chev = html`<svg viewBox="0 0 14 12"><path d="M1 2 L7 10 L13 2" fill="none" stroke="#666" stroke-width="3"/></svg>`;
    return html`<div class="app">
      <div class="title">
        <svg class="logo" viewBox="0 0 28 28">${unsafeSVG(P('3,2 16,2 10,12', '#e02020') + L('M3 20 C2 10 8 6 14 6', '#2a60c8', 5) + L('M4 24 C14 26 22 16 24 6', '#f0c020', 3))}</svg>
        <span class="name">NX 10 - 建模 - [1至28课的练习题.prt（ 修改的 ）]</span>
        <span class="siemens">SIEMENS</span>
        <div class="wc"><svg viewBox="0 0 18 19"><rect x="4" y="12" width="7" height="3" fill="#fff"/></svg></div>
        <div class="wc"><svg viewBox="0 0 18 19"><path d="M7 4h7v7M4 7h7v7H4z" fill="none" stroke="#eee" stroke-width="1.5"/></svg></div>
        <div class="wc" style="margin-right:3px"><svg viewBox="0 0 18 19"><path d="M4 4 L14 15M14 4 L4 15" stroke="#fff" stroke-width="2.200"/></svg></div>
      </div>
      <div class="menu">
        <div class="g2"></div>
        <svg class="lg" viewBox="0 0 28 28">${unsafeSVG(P('6,6 14,2 14,20 6,24', '#5a98e0', '#1a4aa0') + P('14,14 24,10 24,18 14,24', '#2a68c0', '#1a4aa0'))}</svg>
        ${MENU.map(m => html`<span class=${m[2] ? 'wide' : ''}>${m[0]}${m[1] ? html`<u>${m[1]}</u>)` : ''}</span>`)}
        <div class="mdi">
          <div class="mb"><svg viewBox="0 0 15 15"><rect x="3" y="9" width="8" height="2" fill="#777"/></svg></div>
          <div class="mb"><svg viewBox="0 0 15 15"><path d="M5 3h7v6M3 6h7v6H3z" fill="none" stroke="#777" stroke-width="1.300"/></svg></div>
          <div class="mb"><svg viewBox="0 0 15 15"><path d="M3 3 L12 12M12 3 L3 12" stroke="#666" stroke-width="2.400"/></svg></div>
        </div>
      </div>
      <div class="tools">
        ${ROWS.map((groups, ri) => html`<div class="row">${groups.map((g, gi) => {
          const lay = this.rowsLayout[ri];
          const left = gi === 0 ? 0 : lay[1];
          const right = gi === 0 ? lay[0] : lay[2];
          const ml = gi === 0 ? 0 : lay[1] - lay[0];
          return html`<div class="tg" style="width:${right - left}px;margin-left:${ml}px">${g.map(t => this.tok(t))}</div>`;
        })}</div>`)}
      </div>
      <div class="sel">
        <div class="dd" style="width:146px">没有选择过滤器<span class="b"></span></div>
        <div class="dd" style="width:153px;margin-right:4px">整个装配<span class="b"></span></div>
        ${SEL.map(s => s[0] === '|' ? html`<div class="sp"></div>` : s[0] === '>' ? html`<div class="ar"></div>` : s[0] === '_' ? html`<div class="pad"></div>`
          : html`<div class="sit ${s[1] ? 'box' : ''}"><svg viewBox="0 0 28 28">${unsafeSVG(I[s[0]])}</svg></div>`)}
        <div class="end"></div>
      </div>
      <div class="main">
        <div class="rail">
          <svg class="gear" viewBox="0 0 28 28">${unsafeSVG(O(14, 14, 8.5, 'none', '#222', 3.4) + O(14, 14, 2, '#222', 'none') + L('M14 2.500v2M14 23.500v2M2.500 14h2M23.500 14h2M6 6l1.500 1.500M20.500 20.500l1.500 1.500M22 6l-1.500 1.500M7.500 20.500l-1.500 1.500', '#222', 3.4))}</svg>
          ${TABS.map(t => html`<div class="tab ${t.on ? 'on' : ''}" style="margin-top:${t.top}px;height:${t.h}px"><svg viewBox="0 0 28 28">${unsafeSVG(t.i)}</svg></div>`)}
        </div>
        <div class="panel">
          <div class="phead">部件导航器<i></i></div>
          <div class="tree">
            <div class="hd"><div class="s">名称</div><div>最新</div><div>附加</div></div>
            <div class="tb">
              ${this.tree()}
              <svg class="dots" viewBox="0 0 100 110"><path d="M10 10v60M10 10h9M10 30h-3M10 50h3M28 83v13h11" fill="none" stroke="#999" stroke-dasharray="1 1"/></svg>
            </div>
            <div class="hs"><span class="la"></span><div class="th">|||</div><span class="ra"></span></div>
          </div>
          <div class="sash"><u></u><b></b><u></u></div>
          <div class="acc"><span>相依性</span><i>${chev}</i></div>
          <div class="acc"><span>细节</span><i>${chev}</i></div>
          <div class="acc"><span>预览</span><i>${chev}</i></div>
        </div>
        <div class="vp">
          <svg class="scene" viewBox="362 225 1315 727">
            <g transform="translate(640 500) scale(.33333)" stroke-linejoin="round">
              <polygon points="170,80 1090,130 1182,332 1180,370 1160,450 1200,540 1278,540 1337,672 1240,967 345,918 90,365" fill="#7f322c"/>
              <polygon points="170,80 90,365 345,918 425,640 245,405 258,285" fill="#a03f37"/>
              <polygon points="920,200 975,322 1015,415 905,415 880,355 925,210" fill="#a03f37"/>
              <polygon points="170,80 1090,130 1180,332 975,322 918,197 430,175 465,295 258,282" fill="#ff6a5f"/>
              <polygon points="258,304 465,314 465,340 258,326" fill="#ff6a5f"/>
              <polygon points="970,342 1178,352 1178,370 970,360" fill="#ff6a5f"/>
              <polygon points="245,405 445,410 465,340 880,355 910,440 1015,418 1025,440 1160,450 1200,535 1278,540 1337,672 425,636" fill="#ff6a5f"/>
              <polygon points="285,420 300,420 375,585 355,590" fill="#e85c52"/>
              <polygon points="1100,460 1120,460 1205,625 1185,635" fill="#e85c52"/>
              <polygon points="935,450 960,445 985,530 960,530" fill="#8a3a32"/>
              <g fill="none" stroke="#d8564c" stroke-width="6">
                <polygon points="170,80 1090,130 1182,332 1180,370 1160,450 1200,540 1278,540 1337,672 1240,967 345,918 90,365"/>
                <path d="M170 80 L258 282 L465 295 L430 175 L918 197 L975 322 L1180 332M90 365 L905 412 L1015 418 L1025 440 L1160 450M425 636 L345 918M425 636 L1337 676M1337 676 L1240 967"/>
                <path d="M258 304 L465 314M250 324 L465 338M465 340 L880 355 L910 440M970 342 L1178 352M970 360 L1178 372M918 197 L880 355M465 295 L445 410M465 340 L445 410"/>
                <path d="M245 405 L425 636M360 490 L560 505 L525 640M345 520 L540 525M595 520 L1065 540 L1278 540M595 520 L515 660M515 660 L1020 700M1065 540 L1015 670M1045 560 L1270 565"/>
                <path d="M370 340 L490 580M905 415 L1020 695M1095 620 L1240 960M1015 418 L1110 620M1100 460 L1190 630M1118 460 L1205 630"/>
                <path d="M275 420 L345 580M295 420 L365 585M325 575 L385 590"/>
                <ellipse cx="283" cy="140" rx="42" ry="22" fill="#ff6a5f"/><ellipse cx="420" cy="135" rx="30" ry="17" fill="#ff6a5f"/><ellipse cx="875" cy="160" rx="30" ry="17" fill="#ff6a5f"/><ellipse cx="1025" cy="178" rx="40" ry="22" fill="#ff6a5f"/>
                <ellipse cx="485" cy="585" rx="40" ry="22" fill="#ff6a5f"/><ellipse cx="635" cy="605" rx="30" ry="17" fill="#ff6a5f"/><ellipse cx="1092" cy="630" rx="30" ry="17" fill="#ff6a5f"/><ellipse cx="1230" cy="625" rx="40" ry="22" fill="#ff6a5f"/>
                <g stroke="none" fill="#94402f"><ellipse cx="293" cy="142" rx="30" ry="15"/><ellipse cx="427" cy="137" rx="20" ry="10"/><ellipse cx="882" cy="162" rx="20" ry="10"/><ellipse cx="1035" cy="180" rx="28" ry="15"/><ellipse cx="495" cy="587" rx="28" ry="14"/><ellipse cx="642" cy="607" rx="20" ry="10"/><ellipse cx="1100" cy="632" rx="20" ry="9"/><ellipse cx="1240" cy="628" rx="28" ry="14"/></g>
                <ellipse cx="200" cy="420" rx="42" ry="28"/><ellipse cx="345" cy="425" rx="27" ry="15"/><ellipse cx="797" cy="445" rx="30" ry="17"/><ellipse cx="945" cy="463" rx="40" ry="22"/>
                <ellipse cx="405" cy="870" rx="45" ry="25"/><ellipse cx="557" cy="888" rx="32" ry="18"/><ellipse cx="1010" cy="912" rx="32" ry="18"/><ellipse cx="1150" cy="908" rx="42" ry="25"/>
                <path d="M250 150 L185 400M295 165 L225 410M395 145 L330 410M440 155 L365 415M850 170 L775 430M890 175 L820 435M990 190 L910 445M1065 195 L975 450"/>
                <path d="M450 590 L365 850M520 600 L440 860M610 610 L530 875M660 615 L582 882M1065 635 L985 895M1118 640 L1040 905M1195 630 L1115 885M1265 635 L1185 895"/>
                <path d="M860 620 L915 625 L930 640 L912 785 L865 782 L842 745ZM860 620 L842 745M878 635 L930 640M878 635 L865 782M842 745 L912 785"/>
                <path d="M565 610 L620 615 L600 765 L555 765 L522 725ZM565 610 L522 725M545 690 L555 765M545 690 L600 700"/>
              </g>
            </g>
            <g transform="translate(390 650) scale(.33333)" font-family="Liberation Sans, sans-serif" font-size="37">
              <path d="M215 215 L172 135 Q178 122 192 145 Z" fill="#d83030"/>
              <path d="M220 212 L256 85 Q258 110 246 145 Z" fill="#1a6a1a"/>
              <path d="M230 222 L375 232 L330 239 Z" fill="#0a3ad8"/>
              <text x="180" y="121" fill="#d85050">XC</text><text x="203" y="77" fill="#3a9a3a">YC</text><text x="336" y="273" fill="#2a50f0">ZC</text>
              <polygon points="90,628 160,632 178,668 160,730 90,725 75,690" fill="#c4c4c4" fill-opacity=".7" stroke="#b4b4b4" stroke-width="3"/>
              <path d="M90 628 L75 690 M90 725 L145 680 L160 632 M145 680 L178 668 M145 680 L160 730" fill="none" stroke="#b4b4b4" stroke-width="3"/>
              <path d="M88 712 L60 662" stroke="#2a8a2a" stroke-width="7" fill="none"/>
              <path d="M95 722 L118 635" stroke="#0a3ac8" stroke-width="9" fill="none"/>
              <path d="M100 729 L205 734 L165 740 Z" fill="#d02020"/>
              <circle cx="93" cy="728" r="11" fill="#a8a8a8"/>
              <text x="115" y="628" fill="#3a5af0" font-size="30">Z</text><text x="48" y="662" fill="#3a9a3a" font-size="30">Y</text><text x="211" y="747" fill="#d85050" font-size="30">X</text>
            </g>
          </svg>
          <div class="tip">体(0)</div>
        </div>
      </div>
      <div class="bt"><div class="tg">${BOTTOM.map(t => this.tok(t))}</div></div>
      <div class="st"><div class="a"></div><div class="b2">体(0)</div><div class="c"><svg viewBox="0 0 28 28">${unsafeSVG(I.flag)}</svg><svg viewBox="0 0 28 28">${unsafeSVG(R(6, 6, 16, 16, '#fff', '#222', 2) + R(9, 9, 10, 10, '#3a70d8', 'none') + L('M2 7V2h5M21 2h5v5M2 21v5h5M26 21v5h-5', '#555'))}</svg></div></div>
      <div class="dk"></div>
    </div>
    <svg class="wm" viewBox="0 0 1014 363">
      <polygon points="237,58 365,125 365,270 237,340 110,270 110,125" fill="#6b9dd6" stroke="#f2f4f6" stroke-width="8" fill-opacity=".97"/>
      <path d="M282 82 L365 125 V270 L237 340 L145 292 Q190 300 172 235 L262 265 L300 170 Q305 120 282 82 Z" fill="#68c0ea"/>
      <path d="M110 215 Q160 150 190 180M125 110 Q240 85 300 105" fill="none" stroke="#d8e8f4" stroke-width="2"/>
      <polygon points="237,120 303,158 303,232 237,270 171,232 171,158" fill="#6b9dd6" stroke="#f2f4f6" stroke-width="13"/>
      <polygon points="237,195 303,158 303,232 237,270" fill="#68c0ea"/>
      <path d="M171 158 L237 195 L303 158M237 195 V270" fill="none" stroke="#e8f2f8" stroke-width="3"/>
      <text x="385" y="226" font-family="Noto Sans CJK SC, sans-serif" font-weight="700" font-size="148" fill="#62bcea" stroke="#f2f4f6" stroke-width="6" paint-order="stroke" textLength="605">3D世界网</text>
      <text x="395" y="289" font-family="Liberation Sans, sans-serif" font-weight="700" font-size="50" fill="#62bcea" stroke="#f2f4f6" stroke-width="3" paint-order="stroke" textLength="590">WWW.3DSJW.COM</text>
    </svg>`;
  }
}
